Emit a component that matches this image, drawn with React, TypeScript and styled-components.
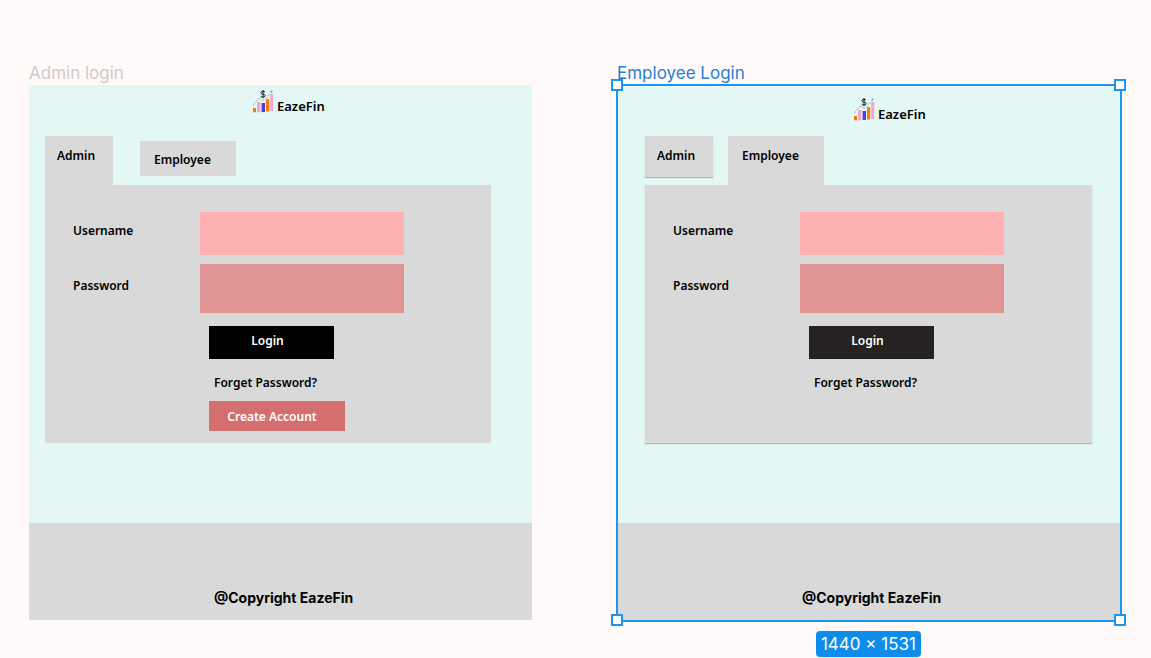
import React, { useId } from "react";
import styled, { createGlobalStyle } from "styled-components";

const GlobalStyle = createGlobalStyle`
  *, *::before, *::after { box-sizing: border-box; }
  body {
    margin: 0;
    background: #fffaf9;
    color: #000;
    font-family: "Noto Sans", sans-serif;
    font-size: 12px;
    font-weight: 600;
    line-height: 20px;
  }
  button, input { font: inherit; color: inherit; border: 0; border-radius: 0; }
`;

const Canvas = styled.main`
  display: grid;
  grid-template-columns: minmax(0, 1fr) minmax(0, 1fr);
  column-gap: 85px;
  padding: 61px 31px 0 29px;
`;

const FrameColumn = styled.section`
  display: flex;
  flex-direction: column;
`;

const FrameTitle = styled.h2<{ $selected: boolean }>`
  margin: 0;
  font-family: Inter, sans-serif;
  font-size: 17px;
  font-weight: 400;
  line-height: 24px;
  color: ${(p) => (p.$selected ? "#2680d0" : "#cfcaca")};
`;

const Frame = styled.div`
  position: relative;
  display: flex;
  flex-direction: column;
  background: #e3f7f5;
`;

const Brand = styled.header<{ $lowered: boolean }>`
  display: flex;
  align-items: flex-start;
  gap: 3px;
  height: 51px;
  padding-top: ${(p) => (p.$lowered ? 12 : 4)}px;
  padding-left: ${(p) => (p.$lowered ? 236 : 223)}px;
`;

const BrandName = styled.span`
  padding-top: 7px;
  font-size: 13px;
`;

const Content = styled.div<{ $wide: boolean }>`
  padding: 0 ${(p) => (p.$wide ? 28 : 41)}px 80px ${(p) => (p.$wide ? 28 : 16)}px;
`;

const Tabs = styled.div<{ $gap: number }>`
  display: flex;
  align-items: flex-start;
  gap: ${(p) => p.$gap}px;
  height: 49px;
`;

const Tab = styled.button<{ $look: "active" | "raised" | "flat"; $wide?: boolean }>`
  display: flex;
  align-items: flex-start;
  width: ${(p) => (p.$wide ? 96 : 68)}px;
  height: ${(p) => ({ active: 49, raised: 41, flat: 35 })[p.$look]}px;
  margin-top: ${(p) => (p.$look === "flat" ? 5 : 0)}px;
  padding: ${(p) => (p.$look === "flat" ? 9 : 10)}px 0 0 ${(p) => (p.$wide ? 14 : 12)}px;
  background: #d9d9d9;
  box-shadow: ${(p) => (p.$look === "raised" ? "0 1px 1px rgba(0, 0, 0, 0.25)" : "none")};
  cursor: pointer;
`;

const Panel = styled.form<{ $raised: boolean }>`
  display: flex;
  flex-direction: column;
  align-items: flex-start;
  min-height: 258px;
  padding: 27px 28px 12px;
  background: #d9d9d9;
  box-shadow: ${(p) => (p.$raised ? "0 1px 1px rgba(0, 0, 0, 0.25)" : "none")};
`;

const Field = styled.div`
  display: flex;
  align-items: center;
  margin-bottom: 9px;
`;

const Label = styled.label`
  width: 127px;
  padding-bottom: 5px;
`;

const TextBox = styled.input<{ $dark?: boolean }>`
  width: 204px;
  height: ${(p) => (p.$dark ? 49 : 43)}px;
  padding: 0 12px;
  background: ${(p) => (p.$dark ? "#df9393" : "#ffb0b0")};
`;

const Actions = styled.div`
  display: flex;
  flex-direction: column;
  align-items: flex-start;
  margin: 4px 0 0 136px;
`;

const LoginButton = styled.button<{ $soft: boolean }>`
  width: 125px;
  height: 33px;
  padding: 0 8px 4px 0;
  background: ${(p) => (p.$soft ? "#262221" : "#000")};
  color: #fff;
  cursor: pointer;
`;

const ForgetLink = styled.a`
  margin: 14px 0 8px 5px;
  color: inherit;
  text-decoration: none;
`;

const CreateButton = styled.button`
  width: 136px;
  height: 30px;
  padding: 1px 10px 0 0;
  background: #d46e6f;
  color: #fff;
  cursor: pointer;
`;

const Footer = styled.footer`
  padding: 65px 0 12px;
  background: #d9d9d9;
  font-family: Inter, sans-serif;
  font-size: 14px;
  font-weight: 700;
`;

const Copyright = styled.p`
  margin: 0 0 0 185px;
`;

const Selection = styled.div`
  position: absolute;
  inset: -1px -2px -2px -1px;
  border: 2px solid #1f94ee;
  pointer-events: none;
`;

const Handle = styled.span<{ $v: "top" | "bottom"; $h: "left" | "right" }>`
  position: absolute;
  ${(p) => p.$v}: ${(p) => (p.$v === "top" ? -7 : -6)}px;
  ${(p) => p.$h}: ${(p) => (p.$h === "left" ? -7 : -6)}px;
  width: 12px;
  height: 12px;
  border: 2px solid #1f94ee;
  background: #fff;
`;

const SizeBadge = styled.output`
  align-self: center;
  margin-top: 11px;
  padding: 1px 5px;
  border-radius: 4px;
  background: #0d8ce9;
  color: #fff;
  font-family: Inter, sans-serif;
  font-size: 17px;
  font-weight: 400;
  line-height: 24px;
`;

function Logo() {
  return (
    <svg width="22" height="24" viewBox="0 0 22 24" aria-hidden="true">
      <path d="M1.5 16 L7 9 L12 11.5 L19.5 3" fill="none" stroke="#9fb0dc" strokeWidth="1" strokeDasharray="3 1" />
      <circle cx="19.5" cy="2.5" r="1" fill="#8093d6" />
      <rect x="1" y="19" width="3" height="4.3" fill="#f57c0b" />
      <rect x="5" y="13" width="3.4" height="10.3" fill="#f3a6cb" />
      <rect x="9.6" y="14" width="3.4" height="9" fill="#4f3fd8" />
      <rect x="14" y="10.2" width="3.2" height="12.3" fill="#f57c0b" />
      <rect x="18.2" y="5" width="3" height="17" fill="#f3a6cb" />
      <path
        d="M13 3.2 C12.4 2 8.8 1.8 8.8 3.7 C8.8 5.4 13.2 4.6 13.2 6.6 C13.2 8.6 9.2 8.4 8.5 7 M11 1 V9"
        fill="none"
        stroke="#171c1b"
        strokeWidth="1"
      />
    </svg>
  );
}

interface LoginFrameProps {
  title: string;
  role: "admin" | "employee";
  size?: string;
}

function LoginFrame({ title, role, size }: LoginFrameProps) {
  const id = useId();
  const employee = role === "employee";
  return (
    <FrameColumn>
      <FrameTitle $selected={!!size}>{title}</FrameTitle>
      <Frame>
        <Brand $lowered={employee}>
          <Logo />
          <BrandName>EazeFin</BrandName>
        </Brand>
        <Content $wide={employee}>
          <Tabs role="tablist" $gap={employee ? 15 : 27}>
            <Tab type="button" role="tab" aria-selected={!employee} $look={employee ? "raised" : "active"}>
              Admin
            </Tab>
            <Tab type="button" role="tab" aria-selected={employee} $look={employee ? "active" : "flat"} $wide>
              Employee
            </Tab>
          </Tabs>
          <Panel $raised={employee} onSubmit={(e) => e.preventDefault()}>
            <Field>
              <Label htmlFor={`${id}-user`}>Username</Label>
              <TextBox id={`${id}-user`} type="text" autoComplete="username" />
            </Field>
            <Field>
              <Label htmlFor={`${id}-pass`}>Password</Label>
              <TextBox id={`${id}-pass`} type="password" autoComplete="current-password" $dark />
            </Field>
            <Actions>
              <LoginButton type="submit" $soft={employee}>Login</LoginButton>
              <ForgetLink href="#forget">Forget Password?</ForgetLink>
              {!employee && <CreateButton type="button">Create Account</CreateButton>}
            </Actions>
          </Panel>
        </Content>
        <Footer>
          <Copyright>@Copyright EazeFin</Copyright>
        </Footer>
        {size && (
          <Selection>
            <Handle $v="top" $h="left" />
            <Handle $v="top" $h="right" />
            <Handle $v="bottom" $h="left" />
            <Handle $v="bottom" $h="right" />
          </Selection>
        )}
      </Frame>
      {size && <SizeBadge>{size}</SizeBadge>}
    </FrameColumn>
  );
}

export default function App() {
  return (
    <>
      <GlobalStyle />
      <Canvas>
        <LoginFrame title="Admin login" role="admin" />
        <LoginFrame title="Employee Login" role="employee" size="1440 × 1531" />
      </Canvas>
    </>
  );
}
